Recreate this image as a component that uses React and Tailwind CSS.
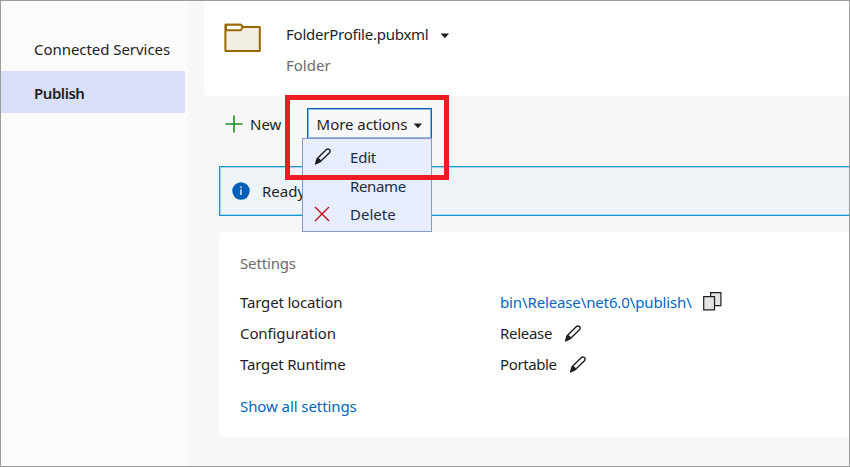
function Pencil({ className = "" }) {
  return (
    <svg className={`shrink-0 ${className}`} width="18" height="18" viewBox="0 0 18 18" fill="none" stroke="#1e1e1e" strokeWidth="1.4" strokeLinejoin="round">
      <path d="M3.1 10.7 11.9 1.9C12.9.9 14.5.8 15.4 1.6c.9.9.8 2.3-.2 3.3L6.4 13.6" />
      <path d="M3.1 10.7C4.8 10.6 6.4 12 6.4 13.6L1.6 15.9Z" fill="#1e1e1e" />
    </svg>
  );
}

function Caret({ className = "" }) {
  return (
    <svg className={`shrink-0 ${className}`} width="10" height="6" viewBox="0 0 10 6">
      <path d="M.7.6h8.4L4.9 5.2Z" fill="#1e1e1e" />
    </svg>
  );
}

function FolderIcon() {
  return (
    <svg className="mt-[22px] shrink-0" width="38" height="30" viewBox="0 0 38 30" fill="none" stroke="#986900" strokeWidth="2" strokeLinejoin="round">
      <path d="M1.4 1.8h15.6l2 2.3h16.8v24H1.4Z" fill="#f4efe5" />
      <path d="M2 7.3h14.7l2.1-3.2-2-2.3H2Z" fill="#fff" />
    </svg>
  );
}

function CopyIcon() {
  return (
    <svg className="ml-[11px] shrink-0" width="19" height="19" viewBox="0 0 19 19" fill="#e4e4e5" stroke="#1e1e1e" strokeWidth="1.2">
      <path d="M7.6.6h10.3v13H7.6Z" />
      <path d="M.7 4.6h10.8v13.3H.7Z" />
    </svg>
  );
}

function SettingRow({ label, labelClass, children }) {
  return (
    <div className="flex h-[31.2px] items-center">
      <span className={`w-[260px] shrink-0 ${labelClass}`}>{label}</span>
      {children}
    </div>
  );
}

export default function App() {
  return (
    <div className="relative flex h-[467px] w-[850px] overflow-hidden border border-[#9c9c9c] bg-[#f7f7f7] font-['Noto_Sans','Open_Sans',sans-serif] text-[15px] leading-5 whitespace-nowrap text-[#1e1e1e]">
      <nav className="w-[187px] shrink-0 bg-[#fbfbfb] pt-[27px]">
        <div className="flex h-[43px] items-center pb-px pl-[33px] tracking-[-0.05px]">Connected Services</div>
        <div className="flex h-[42px] w-[184px] items-center bg-[#d9dff8] pt-[2px] pl-[33px] font-semibold tracking-[-0.45px]">Publish</div>
      </nav>

      <main className="min-w-0 flex-1">
        <header className="ml-4 flex h-[95px] rounded-bl-[5px] bg-white pl-[20px]">
          <FolderIcon />
          <div className="ml-[24px] pt-[23px]">
            <div className="flex items-center">
              <span className="w-[142px] tracking-[-0.24px]">FolderProfile.pubxml</span>
              <Caret className="mt-[4px] ml-[12px]" />
            </div>
            <div className="mt-[11px] text-[#6b6b6b]">Folder</div>
          </div>
        </header>

        <div className="flex h-[70px] items-start pt-[12px] pl-[37px]">
          <div className="flex h-[32px] items-center">
            <svg width="18" height="18" viewBox="0 0 18 18" stroke="#238b24" strokeWidth="1.6">
              <path d="M9 .5v17M.5 9h17" />
            </svg>
            <span className="ml-[7px] w-[32px]">New</span>
          </div>
          <div className="relative ml-[25px]">
            <button className="flex h-[31px] w-[125px] items-center border border-[#0862b2] bg-[#f7f7f7] pl-[8px] shadow-[inset_0_0_0_1px_#8cb6dc]">
              <span className="w-[92px] tracking-[-0.05px]">More actions</span>
              <Caret className="mt-[5px] ml-[5px]" />
            </button>
            <div className="absolute top-[30px] -left-[5px] z-10 h-[94px] w-[130px] border border-[#839bc7] bg-[#e8edfe] text-[#1c2c43]">
              <div className="flex h-[35px] items-center">
                <Pencil className="ml-[11px]" />
                <span className="ml-[18px] tracking-[-0.2px]">Edit</span>
              </div>
              <div className="flex h-[23px] items-center pl-[47px] tracking-[-0.35px]">Rename</div>
              <div className="flex h-[34px] items-center">
                <svg className="-mt-px ml-[11px]" width="16" height="16" viewBox="0 0 16 16" stroke="#c50b17" strokeWidth="1.4">
                  <path d="m1 1 14 14M15 1 1 15" />
                </svg>
                <span className="ml-[20px]">Delete</span>
              </div>
            </div>
            <div className="absolute -top-[13px] -left-[22px] z-20 h-[85px] w-[164px] border-[5px] border-[#ed1c24]" />
          </div>
        </div>

        <div className="-mr-1 ml-[31px] flex h-[50px] items-center border border-[#1595cc] bg-[#eef3f7] pl-[12px] shadow-[inset_0_0_0_1px_#a5d5ea]">
          <svg className="-mt-px" width="18" height="18" viewBox="0 0 18 18" fill="none" stroke="#fff">
            <circle cx="9" cy="9" r="8.7" fill="#005fb8" stroke="none" />
            <path d="M9 7.2v5.8M9 4.5v1.4" strokeWidth="1.3" />
          </svg>
          <span className="ml-[12px]">Ready</span>
        </div>

        <section className="mt-[16px] ml-[31px] h-[205px] rounded-l-[5px] bg-white pt-[21px] pl-[21px]">
          <h2 className="tracking-[-0.15px] text-[#6b6b6b]">Settings</h2>
          <div className="mt-[13px]">
            <SettingRow label="Target location" labelClass="tracking-[-0.17px]">
              <span className="w-[192px] tracking-[-0.13px] text-[#0067c0]">{"bin\\Release\\net6.0\\publish\\"}</span>
              <CopyIcon />
            </SettingRow>
            <SettingRow label="Configuration" labelClass="tracking-[-0.1px]">
              <span className="w-[52px] tracking-[-0.3px]">Release</span>
              <Pencil className="mt-[2px] ml-[12px]" />
            </SettingRow>
            <SettingRow label="Target Runtime" labelClass="tracking-[-0.2px]">
              <span className="w-[57px] tracking-[-0.38px]">Portable</span>
              <Pencil className="mt-[2px] ml-[12px]" />
            </SettingRow>
          </div>
          <a className="mt-[16px] block tracking-[-0.08px] text-[#0067c0]">Show all settings</a>
        </section>
      </main>
    </div>
  );
}
